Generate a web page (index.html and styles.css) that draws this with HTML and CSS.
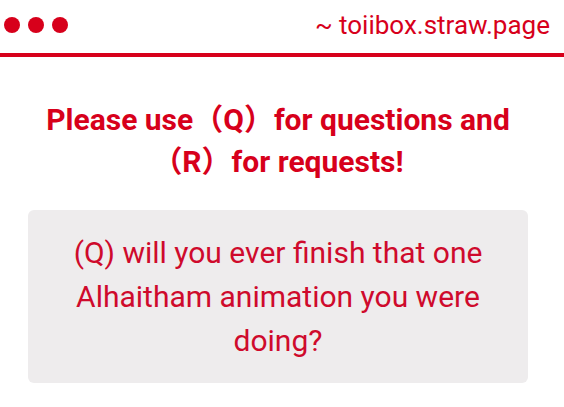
FILE: index.html
```html
<!DOCTYPE html>
<html>
<head>
    <link rel="stylesheet" href="styles.css">
</head>
<body>
    <div class="top-bar">
        <div class="dots">
            <span class="dot"></span>
            <span class="dot"></span>
            <span class="dot"></span>
        </div>
        <div class="site">~ toiibox.straw.page</div>
    </div>

    <div class="main">
        <h1 class="notice">Please use（Q）for questions and（R）for requests!</h1>
        <div class="question-card">
            <p>(Q) will you ever finish that one Alhaitham animation you were doing?</p>
        </div>
    </div>
</body>
</html>
```

FILE: styles.css
```css
*{
    margin: 0;
    padding: 0;
    box-sizing: border-box;
}
body {
    width: 100%;
    height: 100vh;
    font-family: Roboto, "Noto Sans CJK JP", sans-serif;
    background-color: #fff;
    color: #d7001b;
}

.top-bar {
    display: flex;
    justify-content: space-between;
    align-items: center;
    height: 57px;
    padding: 0 14px 4px 4px;
    border-bottom: 4px solid #d7001b;
}

.dots {
    display: flex;
    gap: 8px;
}

.dot {
    width: 16px;
    height: 16px;
    border-radius: 50%;
    background: #d7001b;
}

.site {
    font-size: 26px;
}

.main {
    padding: 42px 36px 0 28px;
}

.notice {
    font-size: 30px;
    font-weight: bold;
    line-height: 42px;
    text-align: center;
    padding: 0 10px;
}

.question-card {
    margin-top: 27px;
    padding: 21px 30px 20px;
    background: #eeeced;
    border-radius: 6px;
    text-align: center;
    font-size: 30px;
    line-height: 44px;
    color: #cf0a2c;
}
```
